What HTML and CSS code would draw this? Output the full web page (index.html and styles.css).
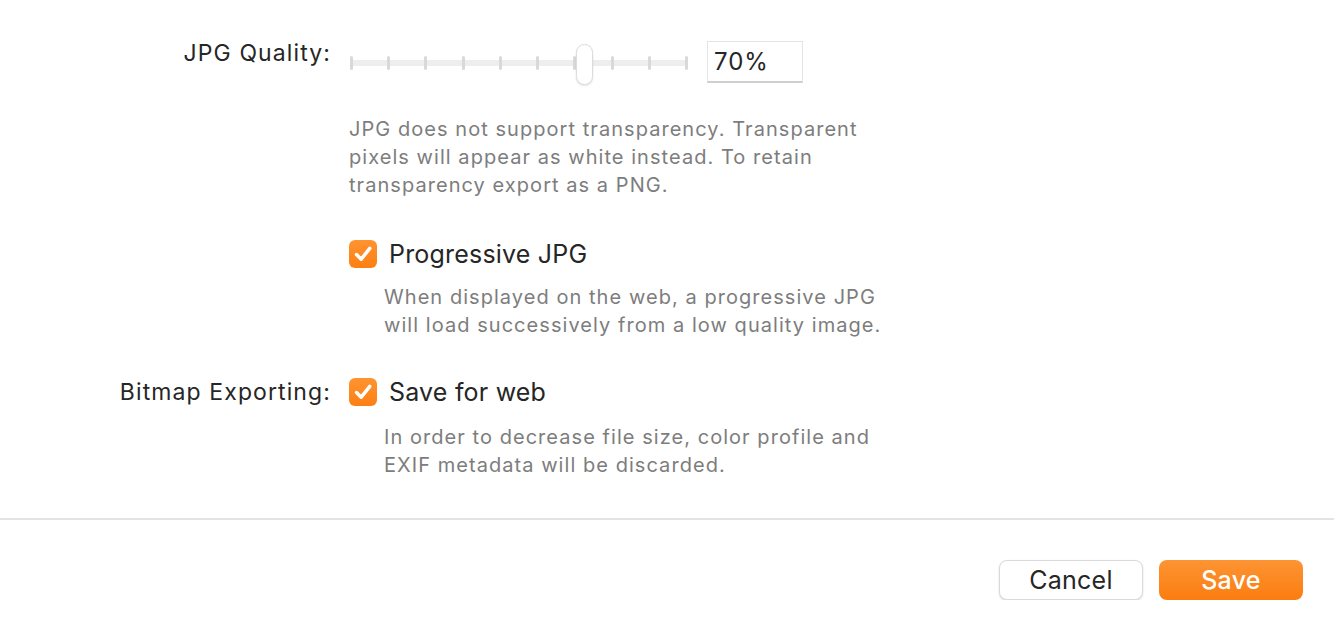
FILE: index.html
```html
<!DOCTYPE html>
<html lang="en">
<head>
    <meta charset="UTF-8">
    <title>Export Options</title>
    <link rel="stylesheet" href="styles.css">
</head>
<body>
    <div class="opcoes">
        <div class="linha linha-qualidade">
            <div class="rotulo rotulo-alto">JPG Quality:</div>
            <div class="conteudo">
                <div class="slider">
                    <div class="trilho"></div>
                    <div class="marcas">
                        <span></span><span></span><span></span><span></span><span></span>
                        <span></span><span></span><span></span><span></span><span></span>
                    </div>
                    <div class="polegar" style="left: 69%;"></div>
                </div>
                <div class="campo">70%</div>
            </div>
        </div>

        <div class="linha descricao-jpg">
            <div class="rotulo"></div>
            <p class="descricao">JPG does not support transparency. Transparent<br>pixels will appear as white instead. To retain<br>transparency export as a PNG.</p>
        </div>

        <div class="linha linha-check check-progressivo">
            <div class="rotulo"></div>
            <label class="check">
                <span class="caixa">
                    <svg viewBox="0 0 28 28" width="28" height="28"><path d="M7.5 14.5 L12.2 19.2 L20.8 8.3" fill="none" stroke="#fff" stroke-width="3.5" stroke-linecap="round" stroke-linejoin="round"/></svg>
                </span>
                Progressive JPG
            </label>
        </div>

        <div class="linha sub">
            <div class="rotulo"></div>
            <p class="descricao recuo">When displayed on the web, a progressive JPG<br>will load successively from a low quality image.</p>
        </div>

        <div class="linha linha-check check-web">
            <div class="rotulo">Bitmap Exporting:</div>
            <label class="check">
                <span class="caixa">
                    <svg viewBox="0 0 28 28" width="28" height="28"><path d="M7.5 14.5 L12.2 19.2 L20.8 8.3" fill="none" stroke="#fff" stroke-width="3.5" stroke-linecap="round" stroke-linejoin="round"/></svg>
                </span>
                Save for web
            </label>
        </div>

        <div class="linha sub sub-final">
            <div class="rotulo"></div>
            <p class="descricao recuo">In order to decrease file size, color profile and<br>EXIF metadata will be discarded.</p>
        </div>
    </div>

    <div class="rodape">
        <button class="botao cancelar">Cancel</button>
        <button class="botao salvar">Save</button>
    </div>
</body>
</html>
```

FILE: styles.css
```css
* {
    margin: 0;
    padding: 0;
    box-sizing: border-box;
    font-family: Inter, 'Noto Sans', sans-serif;
}

body {
    background-color: #ffffff;
    color: #262626;
}

.opcoes {
    padding-top: 41px;
    padding-bottom: 39px;
    border-bottom: 2px solid #e3e3e3;
}

.linha {
    display: flex;
    align-items: center;
}

.rotulo {
    width: 331px;
    flex-shrink: 0;
    text-align: right;
    font-size: 23px;
    letter-spacing: 1.1px;
    margin-right: 18px;
    color: #262626;
}

/* o rótulo da qualidade fica mais alto que o slider */
.rotulo-alto {
    align-self: flex-start;
    margin-top: -2px;
}

.conteudo {
    display: flex;
    align-items: center;
    gap: 18px;
}

/* Slider */
.slider {
    position: relative;
    width: 340px;
    height: 42px;
    display: flex;
    align-items: center;
}

.trilho {
    position: absolute;
    left: 2px;
    right: 2px;
    top: 19px;
    height: 6px;
    background-color: #eeeeee;
    border-radius: 3px;
}

.marcas {
    position: relative;
    width: 100%;
    display: flex;
    justify-content: space-between;
    padding: 0 1px;
    margin-top: 2px;
}

.marcas span {
    width: 3px;
    height: 14px;
    background-color: #d9d9d9;
    border-radius: 2px;
}

.polegar {
    position: absolute;
    top: 3px;
    width: 17px;
    height: 41px;
    margin-left: -8px;
    background-color: #fff;
    border: 1px solid #dcdcdc;
    border-radius: 9px;
    box-shadow: 0 1px 2px rgba(0,0,0,0.12);
}

.campo {
    width: 96px;
    height: 42px;
    border: 1px solid #e4e4e4;
    border-bottom: 2px solid #cfcfcf;
    font-size: 24px;
    letter-spacing: 1px;
    padding: 5px 0 0 6px;
    color: #262626;
}

/* Descrições */
.descricao {
    font-size: 20px;
    letter-spacing: 1.05px;
    line-height: 28px;
    color: #7d7d7d;
}

.descricao.recuo {
    margin-left: 35px;
}

.descricao-jpg {
    margin-top: 32px;
}

.check-progressivo {
    margin-top: 41px;
}

.sub {
    margin-top: 15px;
}

.sub-final {
    margin-top: 17px;
}

.check-web {
    margin-top: 39px;
}

.check {
    display: flex;
    align-items: center;
    gap: 12px;
    font-size: 25px;
    letter-spacing: 0.2px;
    height: 28px;
}

.caixa {
    width: 28px;
    height: 28px;
    border-radius: 6px;
    background: linear-gradient(#ff9431, #fd7f12);
    display: flex;
}

/* Rodapé */
.rodape {
    display: flex;
    justify-content: flex-end;
    gap: 16px;
    padding: 40px 31px 0 0;
}

.botao {
    width: 144px;
    height: 40px;
    border-radius: 8px;
    font-size: 25px;
    letter-spacing: 0.25px;
    cursor: pointer;
}

.cancelar {
    background-color: #fff;
    color: #262626;
    border: 1px solid #dadada;
    box-shadow: 0 1px 2px rgba(0,0,0,0.15);
}

.salvar {
    background: linear-gradient(#fd9433, #fb7d10);
    color: #fff;
    border: none;
    font-weight: 500;
}
```
